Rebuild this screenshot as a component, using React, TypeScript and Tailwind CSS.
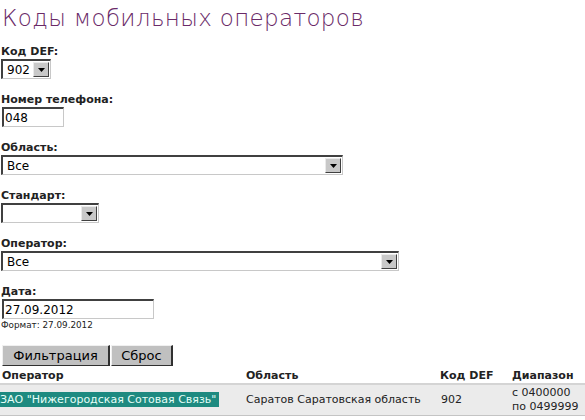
import React from "react";

const font = { fontFamily: '"DejaVu Sans", Verdana, sans-serif' };

function Arrow() {
  return (
    <div className="flex h-full w-[16px] shrink-0 items-center justify-center border-t border-l border-t-[#eaeaea] border-l-[#eaeaea] border-r border-b border-r-[#404040] border-b-[#404040] bg-[#c8c8c8]">
      <svg width="7" height="4" viewBox="0 0 7 4">
        <path d="M0 0 H7 L3.5 4 Z" fill="#000" />
      </svg>
    </div>
  );
}

function Select({ w, value }: { w: string; value: string }) {
  return (
    <div
      className={`${w} flex h-[20px] items-stretch border-t-2 border-l-2 border-t-[#404040] border-l-[#404040] border-r border-b border-r-[#c8c8c8] border-b-[#c8c8c8] bg-white`}
    >
      <div className="flex flex-1 items-center pl-[4px] text-[12px] leading-none text-black">{value}</div>
      <div className="p-[1px] h-full"><Arrow /></div>
    </div>
  );
}

function Input({ w, value }: { w: string; value: string }) {
  return (
    <div
      className={`${w} flex h-[20px] items-center border-t-2 border-l-2 border-t-[#404040] border-l-[#404040] border-r border-b border-r-[#c8c8c8] border-b-[#c8c8c8] bg-white pl-[1px] text-[12px] leading-none text-black`}
    >
      {value}
    </div>
  );
}

function Label({ children }: { children: React.ReactNode }) {
  return <div className="text-[11px] font-bold leading-[15px] text-[#222]">{children}</div>;
}

export default function App() {
  return (
    <div className="h-[420px] w-[585px] overflow-hidden bg-white text-black" style={font}>
      <h1 className="pl-[2px] pt-[3px] text-[23px] font-extralight leading-[30px] tracking-[0.35px] text-[#6a2a68]">
        Коды мобильных операторов
      </h1>
      <div className="mt-[11px] pl-[1px]">
        <Label>Код DEF:</Label>
        <div className="mt-[0px]"><Select w="w-[50px]" value="902" /></div>

        <div className="mt-[13px]"><Label>Номер телефона:</Label></div>
        <div className="pl-[1px]"><Input w="w-[62px]" value="048" /></div>

        <div className="mt-[13px]"><Label>Область:</Label></div>
        <Select w="w-[342px]" value="Все" />

        <div className="mt-[13px]"><Label>Стандарт:</Label></div>
        <Select w="w-[98px]" value="" />

        <div className="mt-[13px]"><Label>Оператор:</Label></div>
        <Select w="w-[398px]" value="Все" />

        <div className="mt-[13px]"><Label>Дата:</Label></div>
        <div className="pl-[1px]"><Input w="w-[152px]" value="27.09.2012" /></div>
        <div className="mt-[1px] text-[8.8px] leading-[10px] text-[#222]">Формат: 27.09.2012</div>

        <div className="mt-[15px] flex gap-[1px] pl-[1px]">
          <div className="flex h-[21px] w-[108px] items-center justify-center border-t border-l border-t-[#f0f0f0] border-l-[#f0f0f0] border-r-2 border-b border-r-[#303030] border-b-[#303030] bg-[#c0c0c0] text-[13px] text-black">
            Фильтрация
          </div>
          <div className="flex h-[21px] w-[62px] items-center justify-center border-t border-l border-t-[#f0f0f0] border-l-[#f0f0f0] border-r-2 border-b border-r-[#303030] border-b-[#303030] bg-[#c0c0c0] text-[13px] text-black">
            Сброс
          </div>
        </div>
      </div>

      <div className="mt-[2px] grid grid-cols-[245px_194px_73px_1fr] text-[11px] font-bold leading-[15px] text-[#222]">
        <div className="pl-[2px]">Оператор</div>
        <div className="pl-[1px]">Область</div>
        <div className="pl-[1px]">Код DEF</div>
        <div>Диапазон</div>
      </div>
      <div className="grid h-[33px] grid-cols-[245px_194px_73px_1fr] items-center border-t-2 border-b border-t-[#d4d4d4] border-b-[#c4c4c4] bg-[#ebebeb] text-[11px] leading-[14px] text-[#222]">
        <div>
          <span className="bg-[#1e8a80] py-[1px] pr-[3px] text-[#e6fff8]">ЗАО "Нижегородская Сотовая Связь"</span>
        </div>
        <div className="pl-[1px]">Саратов Саратовская область</div>
        <div className="pl-[2px]">902</div>
        <div className="flex flex-col">
          <span>с 0400000</span>
          <span>по 0499999</span>
        </div>
      </div>
    </div>
  );
}
